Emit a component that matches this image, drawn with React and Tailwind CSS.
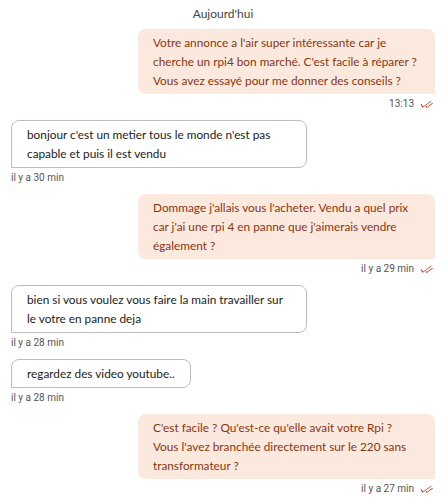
import React from 'react';
import { CheckCheck } from 'lucide-react';

const messages = [
  { me: true, text: "Votre annonce a l'air super intéressante car je cherche un rpi4 bon marché. C'est facile à réparer ? Vous avez essayé pour me donner des conseils ?", time: '13:13' },
  { me: false, text: "bonjour c'est un metier tous le monde n'est pas capable et puis il est vendu", time: 'il y a 30 min' },
  { me: true, text: "Dommage j'allais vous l'acheter. Vendu a quel prix car j'ai une rpi 4 en panne que j'aimerais vendre également ?", time: 'il y a 29 min' },
  { me: false, text: 'bien si vous voulez vous faire la main travailler sur le votre en panne deja', time: 'il y a 28 min' },
  { me: false, text: 'regardez des video youtube..', time: 'il y a 28 min' },
  { me: true, text: "C'est facile ? Qu'est-ce qu'elle avait votre Rpi ? Vous l'avez branchée directement sur le 220 sans transformateur ?", time: 'il y a 27 min' },
];

function Bubble({ me, text, time }) {
  return (
    <div className={`flex flex-col ${me ? 'items-end' : 'items-start'}`}>
      <div
        className={
          me
            ? 'max-w-[297px] rounded-lg rounded-br-none bg-[#fce9de] px-[15px] py-[4px] text-[#8a3510]'
            : 'max-w-[296px] rounded-lg rounded-bl-none border border-[#b8bdc6] bg-white px-[15px] py-[4px] text-[#1c1c1c]'
        }
      >
        <p className="text-[11.8px] leading-[19px]">{text}</p>
      </div>
      <div className={`mt-[4px] flex h-[12px] items-center gap-[6px] ${me ? 'pr-[2px]' : ''}`}>
        <span className="font-['Roboto',sans-serif] text-[10px] leading-[12px] text-[#555]">{time}</span>
        {me && <CheckCheck size={13} strokeWidth={1.6} className="-skew-x-[20deg] text-[#b83512]" />}
      </div>
    </div>
  );
}

export default function App() {
  return (
    <div className="min-h-[500px] bg-white pl-[11px] pr-[13px] pt-[6px] font-['Lato',sans-serif]">
      <div className="text-center text-[12px] leading-[16px] text-[#444]">Aujourd'hui</div>
      <div className="mt-[7px] flex flex-col gap-[10px]">
        {messages.map((m, i) => (
          <Bubble key={i} {...m} />
        ))}
      </div>
    </div>
  );
}
